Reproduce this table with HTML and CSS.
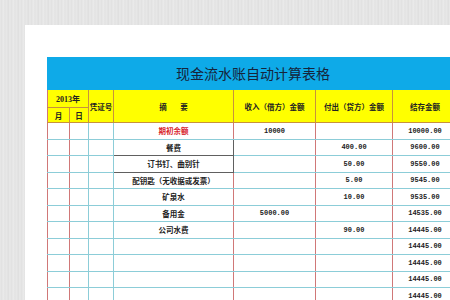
FILE: index.html
```html
<!DOCTYPE html>
<html lang="zh">
<head>
<meta charset="utf-8">
<link rel="stylesheet" href="styles.css">
</head>
<body>
<div class="paper">
  <div class="sheet">
    <div class="title">现金流水账自动计算表格</div>
    <table class="ledger">
      <colgroup>
        <col class="c-m"><col class="c-d"><col class="c-v"><col class="c-s"><col class="c-in"><col class="c-out"><col class="c-bal">
      </colgroup>
      <thead>
        <tr class="h1">
          <th colspan="2" class="yr">2013年</th>
          <th rowspan="2" class="vno">凭证号</th>
          <th rowspan="2">摘&nbsp;&nbsp;&nbsp;&nbsp;&nbsp;&nbsp;&nbsp;&nbsp;要</th>
          <th rowspan="2">收入（借方）金额</th>
          <th rowspan="2">付出（贷方）金额</th>
          <th rowspan="2">结存金额</th>
        </tr>
        <tr class="h2">
          <th>月</th>
          <th>日</th>
        </tr>
      </thead>
      <tbody>
        <tr><td class="m"></td><td class="d"></td><td></td><td class="s red">期初余额</td><td class="n">10000</td><td class="n"></td><td class="n">10000.00</td></tr>
        <tr><td class="m"></td><td class="d"></td><td></td><td class="s box">餐费</td><td class="n"></td><td class="n">400.00</td><td class="n">9600.00</td></tr>
        <tr><td class="m"></td><td class="d"></td><td></td><td class="s box">订书钉、曲别针</td><td class="n"></td><td class="n">50.00</td><td class="n">9550.00</td></tr>
        <tr><td class="m"></td><td class="d"></td><td></td><td class="s">配钥匙（无收据或发票）</td><td class="n"></td><td class="n">5.00</td><td class="n">9545.00</td></tr>
        <tr><td class="m"></td><td class="d"></td><td></td><td class="s">矿泉水</td><td class="n"></td><td class="n">10.00</td><td class="n">9535.00</td></tr>
        <tr><td class="m"></td><td class="d"></td><td></td><td class="s">备用金</td><td class="n">5000.00</td><td class="n"></td><td class="n">14535.00</td></tr>
        <tr><td class="m"></td><td class="d"></td><td></td><td class="s">公司水费</td><td class="n"></td><td class="n">90.00</td><td class="n">14445.00</td></tr>
        <tr><td class="m"></td><td class="d"></td><td></td><td class="s"></td><td class="n"></td><td class="n"></td><td class="n">14445.00</td></tr>
        <tr><td class="m"></td><td class="d"></td><td></td><td class="s"></td><td class="n"></td><td class="n"></td><td class="n">14445.00</td></tr>
        <tr><td class="m"></td><td class="d"></td><td></td><td class="s"></td><td class="n"></td><td class="n"></td><td class="n">14445.00</td></tr>
        <tr><td class="m"></td><td class="d"></td><td></td><td class="s"></td><td class="n"></td><td class="n"></td><td class="n">14445.00</td></tr>
      </tbody>
    </table>
  </div>
</div>
</body>
</html>
```
FILE: styles.css
```css
html, body {
  margin: 0;
  padding: 0;
}
body {
  width: 450px;
  height: 300px;
  overflow: hidden;
  background-color: #e4e4e4;
  background-image: repeating-linear-gradient(90deg,
    #e8e8e8 0px, #e0e0e0 2px, #ececec 3px, #e2e2e2 5px, #e9e9e9 7px, #dddddd 8px, #eaeaea 10px);
  font-family: "Noto Sans CJK SC", sans-serif;
}
.paper {
  margin: 25px 0 0 25px;
  height: 275px;
  background: #ffffff;
  padding: 32px 0 0 22px;
  box-sizing: border-box;
  overflow: hidden;
}
.sheet {
  width: 410px;
}
.title {
  height: 33px;
  background: #0eaae8;
  color: #16243a;
  font-size: 14px;
  line-height: 33px;
  text-align: center;
  padding-left: 2px;
}
.ledger {
  border-collapse: collapse;
  table-layout: fixed;
  width: 410px;
}
.c-m { width: 22px; }
.c-d { width: 19px; }
.c-v { width: 25px; }
.c-s { width: 120px; }
.c-in { width: 82px; }
.c-out { width: 77px; }
.c-bal { width: 65px; }
.ledger th {
  background: #ffff00;
  border: 1px solid #c8923c;
  border-top: none;
  font-size: 7.5px;
  font-weight: bold;
  color: #222;
  padding: 0;
  white-space: nowrap;
  text-align: center;
}
.ledger th:first-child { border-left: 1px solid #d07878; }
.h1 th { height: 17px; }
.h2 th { height: 14px; }
.ledger th.yr { font-family: "Liberation Serif", "Noto Sans CJK SC", serif; font-size: 8px; }
.ledger td {
  height: 15.5px;
  padding: 0;
  border: 1px solid #8ccdd8;
  border-top: none;
  font-size: 7.5px;
  font-weight: bold;
  color: #222;
  text-align: center;
  white-space: nowrap;
}
.ledger td.m { border-left: 1px solid #d07878; border-right: 1px solid #d07878; }
.ledger td.s { border-right: 1px solid #d07878; }
.ledger td.n { border-right: 1px solid #d07878; font-family: "Liberation Mono", monospace; font-size: 7px; }
.ledger td.red { color: #d8242c; }
.ledger td.box { border: 1.5px solid #606060; }
```
